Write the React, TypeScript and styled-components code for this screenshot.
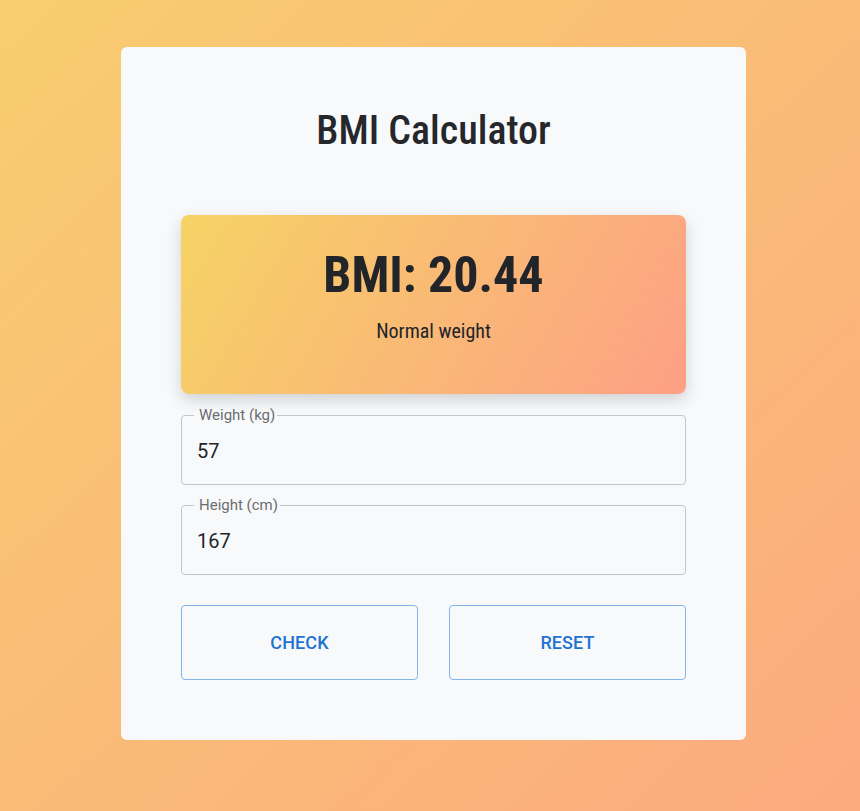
import React, { useState } from "react";
import styled, { createGlobalStyle } from "styled-components";

const GlobalStyle = createGlobalStyle`
  html, body { margin: 0; padding: 0; height: 100%; }
  body {
    font-family: Roboto, "Liberation Sans", sans-serif;
    background: linear-gradient(to bottom right, #f8cd6f 0%, #fcaa7f 100%);
    background-attachment: fixed;
    min-height: 811px;
  }
  * { box-sizing: border-box; }
`;

const Page = styled.div`
  display: flex;
  justify-content: center;
  padding: 47px 0 71px 7px;
`;

const Card = styled.div`
  width: 625px;
  background: #f8f9fb;
  border-radius: 6px;
  padding: 60px 60px 60px;
  display: flex;
  flex-direction: column;
`;

const Title = styled.h1`
  margin: 0 0 60px;
  text-align: center;
  font-family: "Roboto Condensed", Roboto, sans-serif;
  font-stretch: condensed;
  font-weight: 500;
  font-size: 40px;
  line-height: 48px;
  color: #25272b;
`;

const Result = styled.div`
  border-radius: 8px;
  background: linear-gradient(120deg, #f6d365 0%, #fda085 100%);
  box-shadow: 0 6px 16px rgba(0, 0, 0, 0.16);
  padding: 28px 20px 48px;
  text-align: center;
  color: #212429;
`;

const BmiValue = styled.div`
  font-family: "Roboto Condensed", Roboto, sans-serif;
  font-stretch: condensed;
  font-weight: 700;
  font-size: 50px;
  line-height: 64px;
`;

const Category = styled.div`
  margin-top: 9px;
  font-family: "Roboto Condensed", Roboto, sans-serif;
  font-stretch: condensed;
  font-size: 20px;
  line-height: 30px;
`;

const Field = styled.fieldset<{ $first?: boolean }>`
  margin: ${(p) => (p.$first ? "13px" : "12px")} 0 0;
  padding: 0 12px 6px 12px;
  border: 1px solid #c4c6c9;
  border-radius: 4px;
  min-width: 0;
`;

const Legend = styled.legend`
  padding: 0 2px 0 5px;
  margin-left: 0;
  font-size: 15px;
  line-height: 16px;
  color: #6b6d70;
`;

const Input = styled.input`
  display: block;
  width: 100%;
  height: 55px;
  border: none;
  outline: none;
  background: transparent;
  padding: 0 0 0 3px;
  font-family: Roboto, sans-serif;
  font-size: 20px;
  color: #222428;
`;

const Buttons = styled.div`
  display: grid;
  grid-template-columns: 1fr 1fr;
  gap: 31px;
  margin-top: 30px;
`;

const Button = styled.button`
  height: 75px;
  border: 1px solid #84b5ea;
  border-radius: 4px;
  background: transparent;
  color: #1f74d0;
  font-family: Roboto, sans-serif;
  font-weight: 500;
  font-size: 18px;
  letter-spacing: 0.1px;
  text-transform: uppercase;
  cursor: pointer;
`;

export default function App() {
  const [weight, setWeight] = useState("57");
  const [height, setHeight] = useState("167");
  return (
    <>
      <GlobalStyle />
      <Page>
        <Card>
          <Title>BMI Calculator</Title>
          <Result>
            <BmiValue>BMI: 20.44</BmiValue>
            <Category>Normal weight</Category>
          </Result>
          <Field $first>
            <Legend>Weight (kg)</Legend>
            <Input value={weight} onChange={(e) => setWeight(e.target.value)} />
          </Field>
          <Field>
            <Legend>Height (cm)</Legend>
            <Input value={height} onChange={(e) => setHeight(e.target.value)} />
          </Field>
          <Buttons>
            <Button>Check</Button>
            <Button>Reset</Button>
          </Buttons>
        </Card>
      </Page>
    </>
  );
}
